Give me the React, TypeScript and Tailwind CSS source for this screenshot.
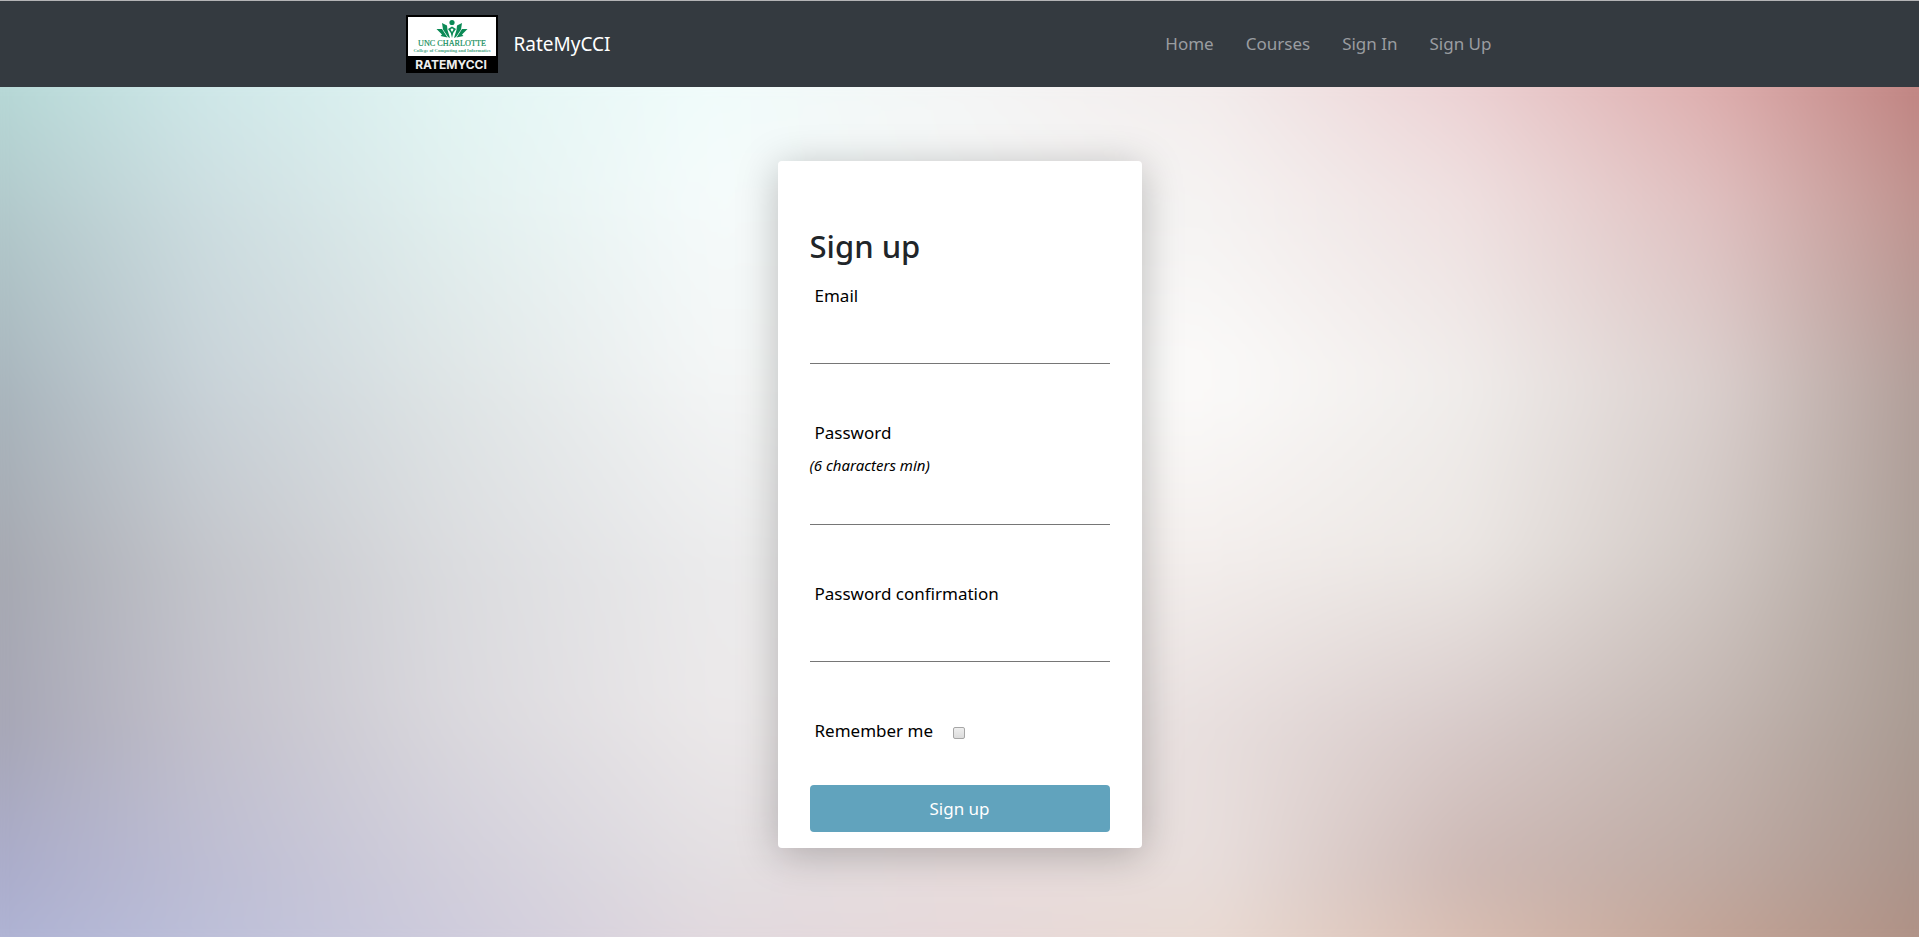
import React from "react";

const rows: { at: number; colors: string[] }[] = [
  { at: 0, colors: ["#b2dad6", "#cfebeb", "#e2f7f5", "#effcfb", "#f3f5f5", "#f2eaea", "#ebcccf", "#dda7a7", "#ba7573"] },
  { at: 18, colors: ["#abc4c6", "#ccdde0", "#e2f0ef", "#f5fbfb", "#f6f7f7", "#f5f3f2", "#efe1e1", "#dfc0c0", "#b88a85"] },
  { at: 37, colors: ["#a1aeb6", "#c8d2d8", "#dfe5e6", "#f3f5f5", "#f8f8f7", "#fbfaf9", "#f0edeb", "#dacfcd", "#a8938d"] },
  { at: 55, colors: ["#9fa2ab", "#c3c5cb", "#dbdcdf", "#ebebec", "#f1efee", "#f3eeec", "#ebe6e3", "#d0c7c3", "#a3958d"] },
  { at: 72, colors: ["#a0a0b0", "#c2c0cb", "#dad8dd", "#ebe8e9", "#eeebeb", "#e8dfde", "#d8cbca", "#c3b6b1", "#a4958c"] },
  { at: 87, colors: ["#a6a8c8", "#bdbdd3", "#d2cfdb", "#e3dfe2", "#e8dddd", "#e8dedc", "#cdb9b5", "#beaaa3", "#a68f86"] },
  { at: 100, colors: ["#aeb4d8", "#bcc0dc", "#cdcadd", "#e0d5dc", "#e6d6d8", "#ead8ce", "#dfc0b0", "#c5a08f", "#ae8c7f"] },
];

function Backdrop() {
  return (
    <div aria-hidden="true" className="absolute inset-0 -z-10 overflow-hidden">
      <div className="absolute -inset-12 grid blur-xl">
        {rows.map((row, i) => {
          const mask = i === 0 ? undefined : `linear-gradient(to bottom, transparent ${rows[i - 1].at}%, black ${row.at}%)`;
          return (
            <div
              key={row.at}
              className="col-start-1 row-start-1"
              style={{ backgroundImage: `linear-gradient(to right, ${row.colors.join(", ")})`, maskImage: mask }}
            />
          );
        })}
      </div>
    </div>
  );
}

function Logo() {
  return (
    <svg viewBox="0 0 92 58" className="h-[58px] w-[92px]" role="img" aria-label="UNC Charlotte RateMyCCI">
      <rect width="92" height="58" fill="#000" />
      <rect x="2" y="2" width="88" height="39" fill="#fff" />
      <g fill="#0b8a56">
        <circle cx="46" cy="7.5" r="2.6" />
        <path d="M46 23l-1.200-5-2.800-4 4-2.500 4 2.500-2.800 4zM46 17l1.500-2.500-1.500-1.200-1.500 1.200z" fillRule="evenodd" />
        <path d="M36 8l5 2.500 0.500 4.500 2.500 8-2-1-5-7.500z" />
        <path d="M56 8l-5 2.500-0.500 4.500-2.500 8 2-1 5-7.500z" />
        <path d="M30.500 14h5.500l5.500 8.500-7-1.500 1.500-1.500z" />
        <path d="M61.500 14h-5.500l-5.500 8.500 7-1.500-1.500-1.500z" />
      </g>
      <text x="46" y="31" textAnchor="middle" fontSize="8.2" fontFamily="Liberation Serif, serif" fill="#0b8a56" stroke="#0b8a56" strokeWidth="0.15">UNC CHARLOTTE</text>
      <text x="46" y="37" textAnchor="middle" fontSize="4.7" fontWeight="700" fontFamily="Liberation Serif, serif" fill="#4aa581">College of Computing and Informatics</text>
      <text x="45" y="53.500" textAnchor="middle" fontSize="12" fontWeight="700" fontFamily="Inter, sans-serif" fill="#eee">RATEMYCCI</text>
    </svg>
  );
}

const links = ["Home", "Courses", "Sign In", "Sign Up"];

function Navbar() {
  return (
    <header className="border-t border-[#b4b4b6] bg-[#343a40]">
      <nav className="mx-auto flex h-[86px] max-w-[1140px] items-center justify-between px-4">
        <a href="#" className="flex items-center gap-4 text-[19px] text-white">
          <Logo />
          RateMyCCI
        </a>
        <ul className="flex gap-8 pr-[22px] text-[17px] text-[#9a9da0]">
          {links.map((label) => (
            <li key={label}>
              <a href="#">{label}</a>
            </li>
          ))}
        </ul>
      </nav>
    </header>
  );
}

function Field({ id, label, hint, type }: { id: string; label: string; hint?: string; type: string }) {
  return (
    <div className="mb-[47px]">
      <label htmlFor={id} className="block px-[5px] pt-1.5 text-[17px] leading-8">
        {label}
      </label>
      {hint && <em className="-mb-2 block text-[15px] leading-8">{hint}</em>}
      <input id={id} type={type} className="block h-[52px] w-full border-b border-[#767676] bg-transparent px-1 outline-none" />
    </div>
  );
}

export default function App() {
  return (
    <div className="flex min-h-screen flex-col font-['Noto_Sans','Open_Sans',sans-serif] text-black">
      <Navbar />
      <main className="relative isolate flex flex-1 items-start justify-center px-4 pt-[74px] pb-[90px]">
        <Backdrop />
        <form
          className="w-full max-w-[364px] rounded bg-white px-8 pt-[65px] pb-4 shadow-[0_6px_40px_rgba(0,0,0,0.25)]"
          onSubmit={(e) => e.preventDefault()}
        >
          <h1 className="mb-2 text-[31px] leading-10 font-medium text-[#212529]">Sign up</h1>
          <Field id="email" label="Email" type="email" />
          <Field id="password" label="Password" hint="(6 characters min)" type="password" />
          <Field id="confirm" label="Password confirmation" type="password" />
          <div className="mb-[38px] flex items-center gap-5 pl-[5px]">
            <label htmlFor="remember" className="pt-1.5 text-[17px] leading-8">
              Remember me
            </label>
            <input
              id="remember"
              type="checkbox"
              className="mt-2.5 size-3 appearance-none rounded-xs border border-[#a6a6a6] bg-linear-to-b from-[#eeeeee] to-[#dcdcdc] checked:bg-[#61a3bd]"
            />
          </div>
          <button type="submit" className="block h-[47px] w-full rounded bg-[#61a3bd] text-[17px] text-white">
            Sign up
          </button>
        </form>
      </main>
    </div>
  );
}
